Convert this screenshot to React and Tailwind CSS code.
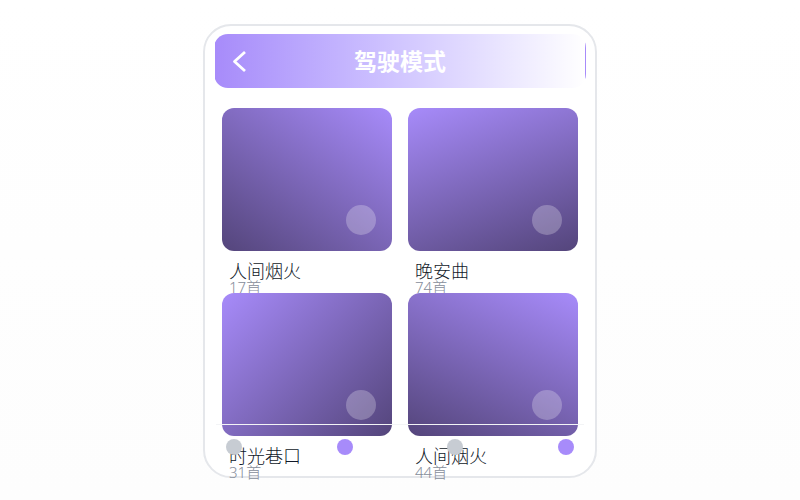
const albums = [
  { id: 1, title: "人间烟火", count: 17, cover: "bg-[linear-gradient(215deg,#a78bfa,#54457b)]" },
  { id: 2, title: "晚安曲", count: 74, cover: "bg-[linear-gradient(160deg,#a78bfa,#54457b)]" },
  { id: 3, title: "时光巷口", count: 31, cover: "bg-[linear-gradient(135deg,#a78bfa,#54457b)]" },
  { id: 4, title: "人间烟火", count: 44, cover: "bg-[linear-gradient(205deg,#a78bfa,#54457b)]" },
];

const tabs = [
  { id: "home", label: "首页", active: false },
  { id: "drive", label: "驾驶", active: true },
  { id: "list", label: "歌单", active: false },
  { id: "mine", label: "我的", active: true },
];

function AlbumCard({ album }) {
  return (
    <article className="h-[185px]">
      <div className={`flex h-[143px] items-end justify-end rounded-xl p-4 ${album.cover}`}>
        <button aria-label={`播放${album.title}`} className="size-[30px] rounded-full bg-white/25" />
      </div>
      <div className="px-[7px] pt-2">
        <h2 className="text-lg leading-6 font-light text-gray-900">{album.title}</h2>
        <p className="text-[15px] leading-2 font-light text-[#858d9a]">{album.count}首</p>
      </div>
    </article>
  );
}

export default function App() {
  return (
    <div className="flex min-h-screen items-center justify-center bg-linear-to-b from-white to-[#fdfdfd] pt-0.5 font-['Noto_Sans','Noto_Sans_CJK_SC',sans-serif]">
      <main className="relative h-[454px] w-full max-w-[394px] rounded-[28px] border-2 border-gray-200 bg-white px-[9px] py-2">
        <header className="grid h-[54px] grid-cols-[48px_1fr_48px] items-center rounded-[14px] border border-transparent bg-linear-to-r from-[#a78bfa] to-white text-white">
          <button aria-label="返回" className="flex justify-center">
            <svg
              className="size-6"
              viewBox="0 0 24 24"
              fill="none"
              stroke="currentColor"
              strokeWidth="2.8"
              strokeLinejoin="round"
            >
              <path d="M18 3 7.5 12.5 18 22" />
            </svg>
          </button>
          <h1 className="text-center text-[23px] leading-8 font-bold">驾驶模式</h1>
        </header>

        <section className="mt-5 grid grid-cols-2 gap-x-4 px-2">
          {albums.map((album) => (
            <AlbumCard key={album.id} album={album} />
          ))}
        </section>

        {/* Tab bar floats over the end of the list */}
        <nav className="absolute inset-x-[11px] bottom-3 flex h-10 justify-between border-t border-gray-100 px-2.5 pt-3.5">
          {tabs.map((tab) => (
            <button
              key={tab.id}
              aria-label={tab.label}
              className={`size-4 rounded-full ${tab.active ? "bg-[#a78bfa]" : "bg-[#c7ccd3]"}`}
            />
          ))}
        </nav>
      </main>
    </div>
  );
}
